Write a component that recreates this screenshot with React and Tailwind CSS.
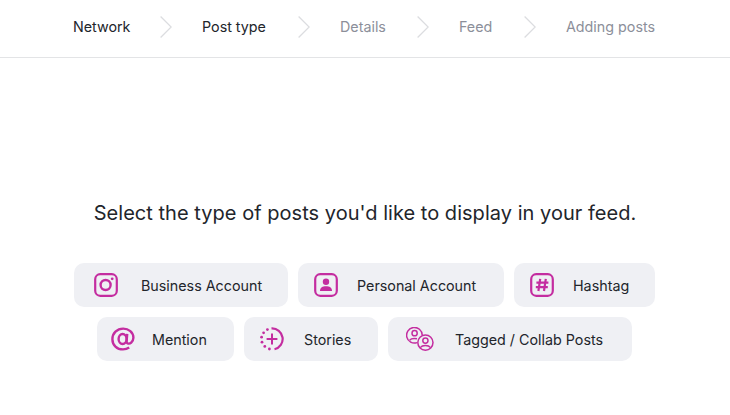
const font = { fontFamily: "Inter, sans-serif" }

const Chevron = () => (
  <svg className="w-[12px] h-[22px] shrink-0 mb-[2px]" viewBox="0 0 12 22" fill="none" stroke="#dcdde0" strokeWidth="1.3">
    <path d="M0.6 0.5 L11.2 11 L0.6 21.5" />
  </svg>
)

const InstaIcon = () => (
  <svg className="w-[24px] h-[24px]" viewBox="0 0 24 24" fill="none" stroke="#c42da0" strokeWidth="2.2">
    <rect x="1.2" y="1.2" width="21.6" height="21.6" rx="5" />
    <circle cx="11.6" cy="12" r="5" strokeWidth="2.4" />
    <circle cx="18.2" cy="5.8" r="1.4" fill="#c42da0" stroke="none" />
  </svg>
)

const PersonIcon = () => (
  <svg className="w-[24px] h-[24px]" viewBox="0 0 24 24" fill="none" stroke="#c42da0" strokeWidth="2.2">
    <rect x="1.2" y="1.2" width="21.6" height="21.6" rx="5" />
    <circle cx="12" cy="8.8" r="3.2" fill="#c42da0" stroke="none" />
    <path d="M6 18 C6 14.6 8.5 13.2 12 13.2 C15.5 13.2 18 14.6 18 18 Z" fill="#c42da0" stroke="none" />
  </svg>
)

const HashIcon = () => (
  <svg className="w-[24px] h-[24px]" viewBox="0 0 24 24" fill="none" stroke="#c42da0" strokeWidth="2.2">
    <rect x="1.2" y="1.2" width="21.6" height="21.6" rx="5" />
    <path d="M10.2 5.8 L8.4 18 M15.8 5.8 L14 18 M6.4 9.6 H18.4 M5.8 14.2 H17.8" />
  </svg>
)

const AtIcon = () => (
  <svg className="w-[24px] h-[24px]" viewBox="0 0 24 24" fill="none" stroke="#c42da0" strokeWidth="2.4">
    <ellipse cx="11.6" cy="12" rx="4" ry="5" />
    <path d="M16.2 6.8 L15.6 14.4 C15.4 16.8 18.4 17.4 20.2 15.6 C21.8 14 22.4 12.4 22.4 10.8 C22.4 5.4 17.6 1.6 12.2 1.6 C6 1.6 1.4 6.2 1.4 12.2 C1.4 18.2 6 22.4 12 22.4 C14.4 22.4 16.4 21.8 18.2 20.6" />
  </svg>
)

const StoriesIcon = () => (
  <svg className="w-[24px] h-[24px]" viewBox="0 0 24 24" fill="none" stroke="#c42da0" strokeWidth="2.2">
    <path d="M11.5 1.4 A10.6 10.6 0 0 1 14.5 22.3" />
    <g fill="#c42da0" stroke="none">
      <circle cx="7.4" cy="2.6" r="1.4" />
      <circle cx="3.6" cy="5.8" r="1.4" />
      <circle cx="1.6" cy="10.2" r="1.4" />
      <circle cx="2" cy="15.2" r="1.4" />
      <circle cx="4.8" cy="19.4" r="1.4" />
      <circle cx="9.4" cy="22" r="1.4" />
    </g>
    <path d="M12 6.6 V17.4 M6.6 12 H17.4" strokeWidth="2" />
  </svg>
)

const TaggedIcon = () => (
  <svg className="w-[28px] h-[24px]" viewBox="0 0 28 24" fill="none" stroke="#c42da0" strokeWidth="1.5">
    <path d="M11 15.6 A7.8 7.8 0 1 1 16.2 8" />
    <circle cx="8.6" cy="6.2" r="2.6" />
    <path d="M3.6 13.2 C5 11.6 7 11.2 11 11.8" />
    <circle cx="19.4" cy="15.6" r="7.6" />
    <circle cx="19.4" cy="13.6" r="2.6" />
    <path d="M14.2 20.6 C15.6 18.8 17.4 18.4 19.4 18.4 C21.4 18.4 23.2 18.8 24.6 20.6" />
  </svg>
)

const Step = ({ label, active, className }) => (
  <span className={`text-[14.3px] whitespace-nowrap pb-[3px] ${active ? "text-[#22252b]" : "text-[#8c8f9a]"} ${className}`}>{label}</span>
)

const PostButton = ({ icon, label, className }) => (
  <button className={`h-[44px] flex items-center rounded-[10px] bg-[#eff0f4] text-[14.3px] text-[#22252b] ${className}`}>
    {icon}
    <span className="whitespace-nowrap pt-[2px]">{label}</span>
  </button>
)

export default function App() {
  return (
    <div className="w-[730px] h-[415px] bg-white overflow-hidden" style={font}>
      <header className="h-[58px] border-b border-[#e3e4e6] flex items-center justify-center pr-[1px] pb-[1px] gap-[30px]">
        <Step label="Network" active className="w-[57px]" />
        <Chevron />
        <Step label="Post type" active className="w-[66px]" />
        <Chevron />
        <Step label="Details" className="w-[47px]" />
        <Chevron />
        <Step label="Feed" className="w-[35px]" />
        <Chevron />
        <Step label="Adding posts" className="w-[90px]" />
      </header>
      <main className="flex flex-col items-center pt-[142px]">
        <h1 className="text-[20px] leading-[26px] font-normal text-[#22252b] tracking-[0.03px]">
          Select the type of posts you'd like to display in your feed.
        </h1>
        <div className="mt-[37px] flex justify-center gap-[10px] pr-[1px]">
          <PostButton icon={<InstaIcon />} label="Business Account" className="w-[214px] pl-[20px] gap-[23px]" />
          <PostButton icon={<PersonIcon />} label="Personal Account" className="w-[206px] pl-[16px] gap-[19px]" />
          <PostButton icon={<HashIcon />} label="Hashtag" className="w-[141px] pl-[16px] gap-[19px]" />
        </div>
        <div className="mt-[10px] flex justify-center gap-[10px] pr-[1px]">
          <PostButton icon={<AtIcon />} label="Mention" className="w-[137px] pl-[14px] gap-[17px]" />
          <PostButton icon={<StoriesIcon />} label="Stories" className="w-[134px] pl-[16px] gap-[20px]" />
          <PostButton icon={<TaggedIcon />} label="Tagged / Collab Posts" className="w-[244px] pl-[18px] gap-[21px]" />
        </div>
      </main>
    </div>
  )
}
